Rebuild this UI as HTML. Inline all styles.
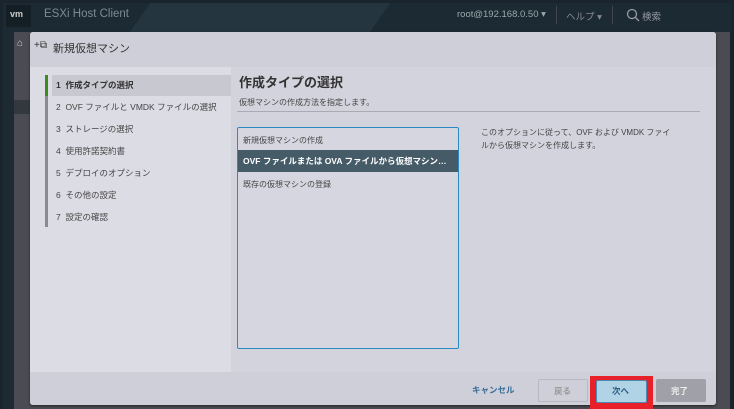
<!DOCTYPE html>
<html><head><meta charset="utf-8"><style>
*{margin:0;padding:0;box-sizing:border-box}
body{width:734px;height:409px;overflow:hidden;background:#1a242c;font-family:"Liberation Sans","Noto Sans CJK JP",sans-serif;position:relative}
.abs{position:absolute}
.hdr{left:3px;top:3px;width:728px;height:29px;background:#1c2a33}
.stripe{left:140px;top:3px;width:240px;height:29px;background:#253540;transform:skewX(-35deg)}
.bg{left:14px;top:32px;width:716px;height:377px;background:#4b4b53}
.side{left:3px;top:32px;width:11px;height:377px;background:#1e2a32}
.dlg{left:30px;top:32px;width:686px;height:373px;background:#d3d3dd;border-radius:3px;box-shadow:0 1px 2px #222}
.t{white-space:nowrap;color:#444;font-size:8.5px}
</style></head><body>
<div class="abs hdr"></div>
<div class="abs stripe"></div>
<div class="abs" style="left:6px;top:5px;width:25px;height:22px;background:#141e25"></div>
<div class="abs t" style="left:10px;top:9px;color:#ccc;font-weight:bold;font-size:9px">vm</div>
<div class="abs t" style="left:44px;top:8px;color:#7d8a94;font-size:11.5px">ESXi Host Client</div>
<div class="abs t" style="left:457px;top:9px;color:#9aa;font-size:9.5px">root@192.168.0.50 ▾</div>
<div class="abs" style="left:556px;top:6px;width:1px;height:18px;background:#445"></div>
<div class="abs t" style="left:566px;top:9px;color:#889;font-size:9.5px">ヘルプ ▾</div>
<div class="abs" style="left:612px;top:6px;width:1px;height:18px;background:#445"></div>
<svg class="abs" style="left:626px;top:8px" width="14" height="14"><circle cx="6" cy="6" r="4.5" fill="none" stroke="#99a" stroke-width="1.3"/><line x1="9.5" y1="9.5" x2="13" y2="13" stroke="#99a" stroke-width="1.3"/></svg>
<div class="abs t" style="left:642px;top:9px;color:#99a;font-size:9.5px">検索</div>
<div class="abs bg"></div>
<div class="abs side"></div>
<div class="abs" style="left:14px;top:100px;width:16px;height:14px;background:#333840"></div>
<div class="abs t" style="left:17px;top:38px;color:#ccc;font-size:10px">⌂</div>
<div class="abs dlg"></div>
<div class="abs" style="left:30px;top:32px;width:686px;height:35px;background:#cfcfd9;border-radius:3px 3px 0 0"></div>
<div class="abs t" style="left:34px;top:40px;font-size:10px;color:#333">+⧉</div>
<div class="abs t" style="left:53px;top:40px;font-size:11px;color:#333">新規仮想マシン</div>
<div class="abs" style="left:30px;top:67px;width:201px;height:305px;background:#dcdce4"></div>
<div class="abs" style="left:30px;top:372px;width:686px;height:33px;background:#cfcfd9;border-radius:0 0 3px 3px"></div>
<div class="abs" style="left:45px;top:75px;width:3px;height:152px;background:#8a8a92"></div>
<div class="abs" style="left:45px;top:75px;width:3px;height:21px;background:#3d8a1e"></div>
<div class="abs" style="left:52px;top:75px;width:179px;height:21px;background:#c8c8d0"></div>
<div class="abs t" style="left:56px;top:79px;font-weight:bold;color:#333">1&nbsp; 作成タイプの選択</div>
<div class="abs t" style="left:56px;top:101px">2&nbsp; OVF ファイルと VMDK ファイルの選択</div>
<div class="abs t" style="left:56px;top:123px">3&nbsp; ストレージの選択</div>
<div class="abs t" style="left:56px;top:145px">4&nbsp; 使用許諾契約書</div>
<div class="abs t" style="left:56px;top:167px">5&nbsp; デプロイのオプション</div>
<div class="abs t" style="left:56px;top:189px">6&nbsp; その他の設定</div>
<div class="abs t" style="left:56px;top:211px">7&nbsp; 設定の確認</div>
<div class="abs t" style="left:239px;top:72px;font-size:13px;font-weight:bold;color:#333">作成タイプの選択</div>
<div class="abs t" style="left:239px;top:97px;font-size:8px;color:#444">仮想マシンの作成方法を指定します。</div>
<div class="abs" style="left:237px;top:111px;width:463px;height:1px;background:#aaaab4"></div>
<div class="abs" style="left:237px;top:127px;width:222px;height:222px;border:1.5px solid #2a8ac4;border-radius:2px;background:#d6d6e0"></div>
<div class="abs t" style="left:243px;top:135px;font-size:8px">新規仮想マシンの作成</div>
<div class="abs" style="left:238px;top:150px;width:220px;height:22px;background:#455b67"></div>
<div class="abs t" style="left:243px;top:155px;font-size:8.5px;color:#fff;font-weight:bold">OVF ファイルまたは OVA ファイルから仮想マシン…</div>
<div class="abs t" style="left:243px;top:179px;font-size:8px">既存の仮想マシンの登録</div>
<div class="abs t" style="left:481px;top:126px;font-size:8px;line-height:13px">このオプションに従って、OVF および VMDK ファイ<br>ルから仮想マシンを作成します。</div>
<div class="abs t" style="left:472px;top:384px;font-size:8.5px;color:#3a6e96;font-weight:bold">キャンセル</div>
<div class="abs" style="left:538px;top:379px;width:50px;height:23px;border:1px solid #b8b8c0;border-radius:2px"></div>
<div class="abs t" style="left:554px;top:385px;font-size:8.5px;color:#999;font-weight:bold">戻る</div>
<div class="abs" style="left:590px;top:376px;width:63px;height:33px;background:#e8202a"></div>
<div class="abs" style="left:596px;top:380px;width:51px;height:23px;background:#b0d4e6;border:1px solid #4a8ab0;border-radius:2px"></div>
<div class="abs t" style="left:612px;top:385px;font-size:8.5px;color:#2a5a80;font-weight:bold">次へ</div>
<div class="abs" style="left:656px;top:379px;width:50px;height:23px;background:#a0a0a8;border-radius:2px"></div>
<div class="abs t" style="left:671px;top:385px;font-size:8.5px;color:#eee;font-weight:bold">完了</div>
</body></html>
